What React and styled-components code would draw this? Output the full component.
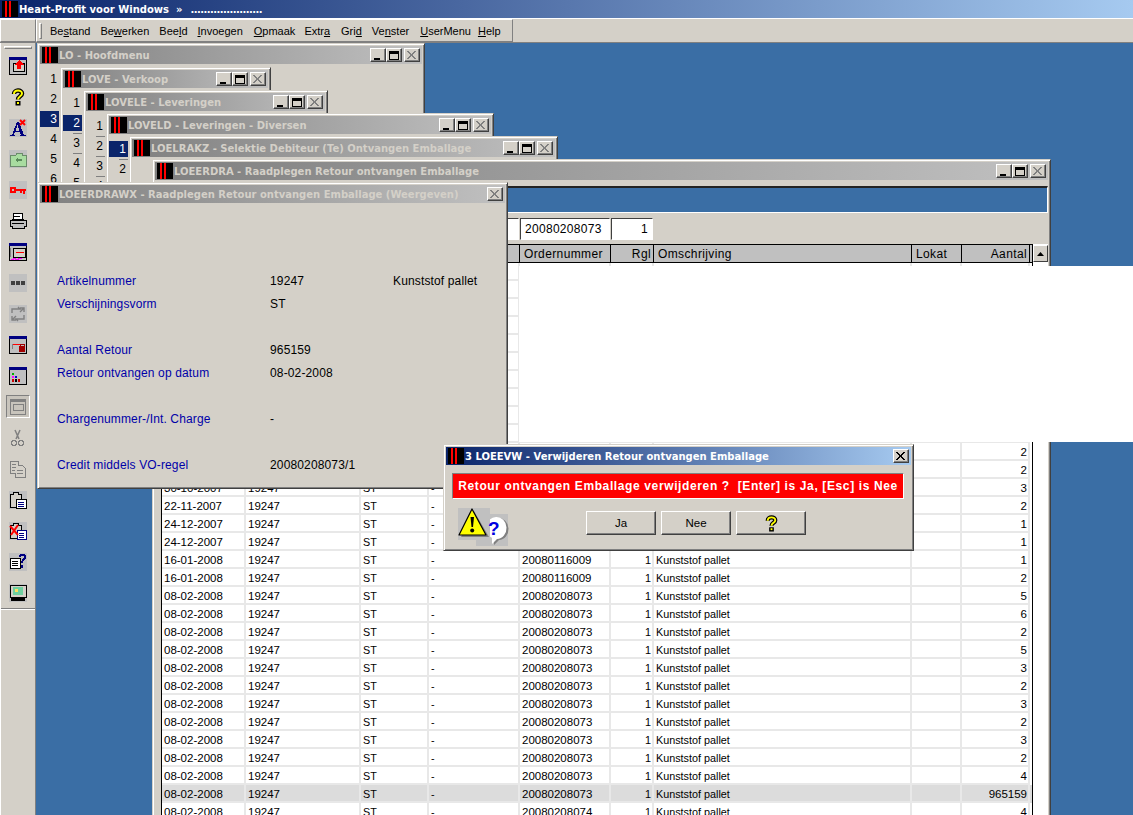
import React from "react";
import styled, { createGlobalStyle } from "styled-components";

const Global = createGlobalStyle`
  html, body { margin: 0; padding: 0; background: #d4d0c8; overflow: hidden; }
  * { box-sizing: border-box; }
`;
const UI = `"Liberation Sans", Arial, sans-serif`;
const HEAD = `"DejaVu Sans", Verdana, sans-serif`;

const Screen = styled.div`
  width: 1133px; height: 815px; display: flex; flex-direction: column; overflow: hidden;
  background: #d4d0c8; font-family: ${UI}; font-size: 11px; color: #000;
`;
const AppTitle = styled.div`
  height: 18px; display: flex; align-items: center; padding-left: 2px; gap: 1px; flex: none;
  background: linear-gradient(90deg, #0a246a, #a6caf0); color: #fff;
  font: bold 10px ${HEAD}; white-space: pre;
`;
const Dots = styled.span`letter-spacing: -0.55px;`;
const MenuStrip = styled.div`
  height: 25px; flex: none; display: flex; border-top: 1px solid #fff;
  border-bottom: 1px solid #808080; background: #d4d0c8;
`;
const Band = styled.div`
  height: 23px; width: ${p => p.$w}px; display: flex; align-items: center; flex: none;
  border: 1px solid; border-color: #fff #808080 #808080 #fff;
`;
const Grip = styled.span`
  width: 3px; height: 16px; margin: 0 8px 0 2px; border: 1px solid; border-color: #fff #808080 #808080 #fff;
`;
const MenuItem = styled.span`
  margin-right: ${p => p.$gap}px; font-size: 11px; u { text-underline-offset: 1px; }
`;
const Body = styled.div`display: flex; flex: 1; min-height: 0;`;
const Tools = styled.div`
  width: 36px; flex: none; display: flex; flex-direction: column; align-items: center; position: relative;
  border-left: 1px solid #fff; border-right: 1px solid #808080; padding-top: 3px;
  background: linear-gradient(#d4d0c8 565px, #808080 565px, #808080 566px, #fff 566px, #fff 567px, #d4d0c8 567px);
`;
const ToolGrip = styled.div`
  width: 28px; height: 3px; flex: none; margin-bottom: 1px; border: 1px solid; border-color: #fff #808080 #808080 #fff;
`;
const ToolSlot = styled.div`
  width: 24px; height: 31px; flex: none; display: flex; align-items: center; justify-content: center;
  ${p => p.$active && `
    & > div { width: 24px; height: 23px; display:flex; align-items:center; justify-content:center;
      border: 1px solid; border-color: #808080 #fff #fff #808080; background: #c8c4bc; }
  `}
`;
const Desktop = styled.div`position: relative; flex: 1; background: #3a6ea5; overflow: hidden;`;

const Win = styled.div`
  position: absolute; left: ${p => p.$x - 36}px; top: ${p => p.$y - 43}px;
  width: ${p => p.$w}px; height: ${p => p.$h}px; padding: 2px;
  background: #d4d0c8; border: 1px solid; border-color: #d4d0c8 #404040 #404040 #d4d0c8;
  box-shadow: inset 1px 1px 0 #fff, inset -1px -1px 0 #808080;
  display: flex; flex-direction: column;
`;
const Caption = styled.div`
  height: 18px; flex: none; display: flex; align-items: center; padding: 0 2px;
  background: ${p => p.$active ? "linear-gradient(90deg, #0a246a, #a6caf0)" : "linear-gradient(90deg, #808080, #c0c0c0)"};
  color: ${p => p.$active ? "#fff" : "#d4d0c8"};
  font: bold 10px ${HEAD}; white-space: pre;
`;
const CaptionText = styled.span`flex: 1; margin-left: 1px; overflow: hidden;`;
const CapBtn = styled.span`
  width: 16px; height: 14px; flex: none; display: flex; align-items: center; justify-content: center;
  margin-left: ${p => p.$gap || 0}px; background: #d4d0c8;
  border: 1px solid; border-color: #fff #404040 #404040 #fff; box-shadow: inset -1px -1px 0 #808080;
`;
const MenuList = styled.div`padding-top: 7px; display: flex; flex-direction: column;`;
const MenuRow = styled.div`height: 20px; flex: none;`;
const MenuNum = styled.div`
  position: relative; width: 19px; height: 16px; line-height: 16px; text-align: right; padding-right: 2px; font-size: 12px;
  background: ${p => p.$sel ? "#0a246a" : "transparent"}; color: ${p => p.$sel ? "#fff" : "#000"};
  ${p => p.$rule && `&::before { content: ""; position: absolute; right: 0; top: -2px; width: 9px; height: 1px; background: #808080; }`}
`;
const TablePad = styled.div`display: flex; flex-direction: column; flex: 1; padding: 0 0 0 6px; min-height: 0;`;
const BluePanel = styled.div`
  height: 27px; margin: 6px 0 0 0; flex: none; background: #3a6ea5; border: 1px solid; border-color: #000 #fff #fff #000;
  border-top: 2px solid #222;
`;
const COLS = "84px 115px 68px 91px 91px 43px 258px 50px 68px 2px";
const FilterRow = styled.div`
  display: grid; grid-template-columns: ${COLS}; height: 22px; margin: 5px 0 4px 1px; flex: none;
`;
const Field = styled.div`
  height: 22px; padding: 0 4px; line-height: 20px; background: #fff; font-size: 12px; letter-spacing: 0.3px;
  margin-right: 1px; text-align: ${p => p.$right ? "right" : "left"};
  border: 1px solid; border-color: #404040 #fff #fff #404040;
`;
const GridWrap = styled.div`position: relative; width: 872px; flex: 1; border-left: 1px solid #000; border-right: 1px solid #000; background: #fff;`;
const HeadRow = styled.div`
  display: grid; grid-template-columns: ${COLS}; height: 19px; background: #c0c0c0;
  border-top: 1px solid #000; border-bottom: 1px solid #000;
`;
const HeadCell = styled.div`
  line-height: 18px; padding: 0 2px 0 4px; font-size: 12px; letter-spacing: 0.38px; border-right: 1px solid #000; overflow: hidden; white-space: nowrap;
  text-align: ${p => p.$right ? "right" : "left"};
`;
const Row = styled.div`
  display: grid; grid-template-columns: ${COLS}; height: 18px;
  background: ${p => p.$sel ? "#dcdcdc" : "#fff"};
`;
const Cell = styled.div`
  line-height: 18px; padding: 0 ${p => p.$right ? 1 : 2}px 0 2px; font-size: 10.8px; overflow: hidden; white-space: nowrap;
  border-right: 2px solid #e8e8e8; border-bottom: 2px solid #e8e8e8;
  text-align: ${p => p.$right ? "right" : "left"};
`;
const DateText = styled.span`font-size: 11.5px;`;
const ScrollTrack = styled.div`
  position: absolute; left: 871px; top: 0; bottom: 0; width: 15px; background: #fff;
`;
const ScrollBtn = styled.div`
  margin-top: 1px; width: 15px; height: 17px; background: #d4d0c8;
  display: flex; align-items: center; justify-content: center;
  border: 1px solid; border-color: #fff #404040 #404040 #fff;
`;
const WhitePatch = styled.div`
  position: absolute; left: ${519 - 36}px; top: ${266 - 43}px; width: ${1133 - 519}px; height: ${442 - 266}px; background: #fff;
`;
const FormBody = styled.div`
  display: grid; grid-template-columns: 213px 123px 1fr; grid-auto-rows: 23px; padding: 66px 0 0 17px; align-items: center;
`;
const FormLabel = styled.div`color: #0000a8; font-size: 12px; letter-spacing: 0.14px;`;
const FormValue = styled.div`font-size: 12px; letter-spacing: 0.14px;`;
const Alert = styled.div`
  height: 26px; margin: 8px 7px 0 6px; background: #f00; color: #fff; white-space: pre; flex: none; text-align: center;
  font: bold 12px/24px ${UI}; letter-spacing: 0.62px;
  border: 1px solid; border-color: #808080 #fff #fff #808080;
`;
const DialogBottom = styled.div`position: relative; display: flex; gap: 5px; padding: 12px 0 0 140px;`;
const Btn = styled.div`
  width: 70px; height: 24px; display: flex; align-items: center; justify-content: center; font-size: 11.5px;
  background: #d4d0c8; border: 1px solid; border-color: #fff #404040 #404040 #fff; box-shadow: inset -1px -1px 0 #808080;
`;
const DialogArt = styled.div`position: absolute; left: 12px; top: 9px; width: 52px; height: 40px;`;

/* ---- drawings ---- */
const Logo = () => (
  <svg width="16" height="16" viewBox="0 0 16 16" shapeRendering="crispEdges" style={{ flex: "none" }}>
    <rect width="16" height="16" fill="#000" />
    <rect x="3" width="2" height="16" fill="#f00" />
    <rect x="7" width="2" height="16" fill="#f00" />
  </svg>
);
const Glyph = ({ kind, dark }) => {
  const c = "#000";
  return (
    <svg width="10" height="9" viewBox="0 0 10 9" shapeRendering="crispEdges">
      {kind === "min" && <rect x="1" y="7" width="6" height="2" fill={c} />}
      {kind === "max" && <path d="M0.5 1.5h9v7h-9z M0 0h10v2H0z" fill="none" stroke={c} />}
      {kind === "close" && (
        <path d="M1 0l8 8M0 0l8 8M9 0l-8 8M8 0L0 8" stroke={dark ? "#000" : "#808080"} strokeWidth="1" shapeRendering="auto" />
      )}
    </svg>
  );
};
const Question = ({ s = 18 }) => (
  <svg width={s} height={s} viewBox="0 0 18 18">
    <path d="M5 6C5 1.500 13 1.500 13 5.500C13 8.500 9 8 9 11.500" fill="none" stroke="#000" strokeWidth="4.500" />
    <rect x="6.500" y="13" width="5" height="4.500" fill="#000" />
    <path d="M5 6C5 1.500 13 1.500 13 5.500C13 8.500 9 8 9 11.500" fill="none" stroke="#ff0" strokeWidth="2" />
    <rect x="8" y="14" width="2" height="2" fill="#ff0" />
  </svg>
);
const I = ({ children, bg }) => (
  <svg width="18" height="18" viewBox="0 0 18 18" shapeRendering="crispEdges">
    {bg && <rect width="18" height="18" fill="#c0c0c0" />}
    {children}
  </svg>
);
const Frame = ({ children }) => (
  <I>
    <rect x="0.5" y="0.5" width="17" height="17" fill="#c0c0c0" stroke="#000" />
    <rect width="18" height="3" fill="#000080" />
    {children}
  </I>
);
const icons = [
  <Frame><rect x="4" y="6" width="11" height="8" fill="#d4d0c8" stroke="#000" /><path d="M10 3l5 5h-3v4H8V8H5z" fill="#f00" /></Frame>,
  <Question />,
  <I bg><path d="M1 17h5v-1H5l1-3h5l1 3h-1v1h6v-1h-2L10 3H8L3 16H1zM6.500 12L8.500 6l2 6z" fill="#000080" /><path d="M11 1l5 5M16 1l-5 5" stroke="#f00" strokeWidth="2" shapeRendering="auto" /></I>,
  <I bg><path d="M1 5h6l1 -2h5v2h4v11H1z" fill="#a8dca0" stroke="#6a8a6a" /><path d="M6 10l3-3v2h4v2H9v2z" fill="#5a8a5a" /></I>,
  <I bg><circle cx="4" cy="9" r="2.500" fill="none" stroke="#f00" strokeWidth="2" /><path d="M7 8h10v2h-1v3h-2v-3h-1v2h-2v-2H7z" fill="#f00" /></I>,
  <I><path d="M5 1h8l1 6H4z" fill="#fff" stroke="#000" /><path d="M1 8h16v6h-2v2H3v-2H1z" fill="#c0c0c0" stroke="#000" /><path d="M3 11h12M5 4h6" stroke="#000" /></I>,
  <Frame><rect x="4" y="5" width="12" height="9" fill="#d4d0c8" stroke="#000" /><rect x="7" y="9" width="8" height="1" fill="#f00" /><path d="M2 16h2v-1h2v1h3v-1h3v1" stroke="#f0f" fill="none" /><rect x="1" y="5" width="1" height="9" fill="#808080" /></Frame>,
  <I bg><rect x="2" y="7" width="4" height="4" fill="#404040" /><rect x="7" y="7" width="4" height="4" fill="#404040" /><rect x="12" y="7" width="4" height="4" fill="#404040" /></I>,
  <I bg><path d="M3 8V4h8l-2-2M15 10v4H7l2 2M3 15l4-4M3 11v4h4M15 3l-4 4M15 7V3h-4" fill="none" stroke="#808080" strokeWidth="1.400" shapeRendering="auto" /></I>,
  <Frame><rect x="3" y="8" width="10" height="1" fill="#f00" /><rect x="3" y="8" width="1" height="5" fill="#808080" /><rect x="10" y="10" width="6" height="6" fill="#a00000" /><path d="M11 10V8h4v2" fill="none" stroke="#a00000" /></Frame>,
  <Frame><rect x="3" y="6" width="2" height="2" fill="#0a0" /><rect x="3" y="9" width="2" height="2" fill="#f0f" /><rect x="3" y="12" width="2" height="3" fill="#c00" /><rect x="6" y="9" width="2" height="2" fill="#00c" /><rect x="6" y="12" width="2" height="3" fill="#000" /><rect x="9" y="12" width="2" height="3" fill="#c00" /></Frame>,
  <div><I><rect x="1.500" y="1.500" width="15" height="15" fill="none" stroke="#808080" strokeWidth="1.500" /><rect x="1" y="1" width="16" height="3" fill="#808080" /><rect x="4" y="6" width="10" height="6" fill="none" stroke="#808080" /></I></div>,
  <I><path d="M6 1l4 9M11 1L7 10" stroke="#808080" strokeWidth="1.500" shapeRendering="auto" /><circle cx="5" cy="14" r="2.500" fill="none" stroke="#808080" strokeWidth="1.500" /><circle cx="12" cy="14" r="2.500" fill="none" stroke="#808080" strokeWidth="1.500" /></I>,
  <I><path d="M1 1h8v4h4l3 3v9H6v-4H1z" fill="#d4d0c8" stroke="#808080" /><path d="M3 4h4M3 7h4M3 10h3M8 10h6M8 13h6" stroke="#808080" /></I>,
  <I bg><path d="M1 3h3V1h5v2h3v13H1z" fill="#d4d0c8" stroke="#000" /><rect x="7" y="8" width="10" height="9" fill="#fff" stroke="#000" /><path d="M9 11h6M9 13h6M9 15h6" stroke="#000080" /></I>,
  <I bg><path d="M1 3h3V1h5v2h3v13H1z" fill="#d4d0c8" stroke="#000" /><rect x="8" y="8" width="9" height="9" fill="#fff" stroke="#000080" /><path d="M10 11h5M10 13h5M10 15h5" stroke="#000080" /><path d="M1 4l8 9M9 3l-7 10" stroke="#f00" strokeWidth="2" shapeRendering="auto" /></I>,
  <I bg><path d="M1 5h10v10H1z" fill="#fff" stroke="#000" /><path d="M3 8h6M3 10h6M3 12h6" stroke="#000" /><path d="M11 4C11 1 16 1 16 4C16 7 13 6 13 10" fill="none" stroke="#000080" strokeWidth="2" /><rect x="12" y="12" width="2" height="3" fill="#000080" /></I>,
  <I bg><rect x="1" y="1" width="16" height="12" fill="#d4d0c8" stroke="#000" /><rect x="4" y="3" width="10" height="8" fill="#6fd0a0" /><rect x="6" y="5" width="3" height="3" fill="#ffe060" /><rect x="2" y="14" width="14" height="3" fill="#000" /></I>,
];

const Warn = () => (
  <svg width="52" height="40" viewBox="0 0 52 40">
    <rect x="18" y="6" width="32" height="32" fill="#c0c0c0" />
    <path d="M38 9a10 11 0 1 1 1 22l-5 5 0-6A10 11 0 0 1 38 9z" fill="#808080" transform="translate(2 1)" />
    <path d="M38 9a10 11 0 1 1 1 22l-5 5 0-6A10 11 0 0 1 38 9z" fill="#fff" />
    <rect width="32" height="32" fill="#c0c0c0" />
    <path d="M16 3L31 29H3z" fill="#808080" />
    <path d="M14 1L28 27H1z" fill="#ff0" stroke="#000" strokeWidth="1.200" strokeLinejoin="round" />
    <path d="M12.500 9h3.500l-1 10h-1.500z" fill="#000" />
    <circle cx="14.200" cy="22.500" r="2" fill="#000" />
    <text x="30" y="27" fill="#0000e0" style={{ font: `bold 19px ${UI}` }}>?</text>
  </svg>
);

/* ---- data ---- */
const menu = [
  ["Be", "s", "tand", 10], ["Be", "w", "erken", 10], ["Bee", "l", "d", 10], ["", "I", "nvoegen", 11],
  ["", "O", "pmaak", 9], ["Extr", "a", "", 11], ["Gri", "d", "", 10], ["Ve", "n", "ster", 11],
  ["", "U", "serMenu", 7], ["", "H", "elp", 0],
];
const O1 = "20080208073";
const rowData = [
  ...Array.from({ length: 10 }, () => ["30-10-2007", "20071030011", 2]),
  ["30-10-2007", "20071030011", 2], ["30-10-2007", "20071030011", 2],
  ["30-10-2007", "20071030011", 3], ["22-11-2007", "20071122005", 2], ["24-12-2007", "20071224002", 1], ["24-12-2007", "20071224002", 1],
  ["16-01-2008", "20080116009", 1], ["16-01-2008", "20080116009", 2],
  ["08-02-2008", O1, 5], ["08-02-2008", O1, 6], ["08-02-2008", O1, 2], ["08-02-2008", O1, 5], ["08-02-2008", O1, 3],
  ["08-02-2008", O1, 2], ["08-02-2008", O1, 3], ["08-02-2008", O1, 2], ["08-02-2008", O1, 3], ["08-02-2008", O1, 2],
  ["08-02-2008", O1, 4], ["08-02-2008", O1, 965159], ["08-02-2008", "20080208074", 4],
];
const formRows = [
  ["Artikelnummer", "19247", "Kunststof pallet"], ["Verschijningsvorm", "ST"], [],
  ["Aantal Retour", "965159"], ["Retour ontvangen op datum", "08-02-2008"], [],
  ["Chargenummer-/Int. Charge", "-"], [],
  ["Credit middels VO-regel", "20080208073/1"],
];

const Buttons = ({ full, active }) => (
  <>
    {full && <CapBtn><Glyph kind="min" /></CapBtn>}
    {full && <CapBtn><Glyph kind="max" /></CapBtn>}
    <CapBtn $gap={full ? 2 : 0}><Glyph kind="close" dark={active} /></CapBtn>
  </>
);
const TitleOf = ({ text, full = true, active }) => (
  <Caption $active={active}>
    <Logo />
    <CaptionText>{text}</CaptionText>
    <Buttons full={full} active={active} />
  </Caption>
);
const Numbers = ({ sel, rules = [] }) => (
  <MenuList>
    {[1, 2, 3, 4, 5, 6, 7, 8].map(n => (
      <MenuRow key={n}>
        <MenuNum $sel={n === sel} $rule={rules.includes(n)}>{n}</MenuNum>
      </MenuRow>
    ))}
  </MenuList>
);

export default function App() {
  return (
    <Screen>
      <Global />
      <AppTitle><Logo />{"Heart-Profit voor Windows  »  "}<Dots>......................</Dots></AppTitle>
      <MenuStrip>
        <Band $w={36} />
        <Band $w={477}>
          <Grip />
          {menu.map(([a, u, b, g]) => (
            <MenuItem key={a + u + b} $gap={g}>{a}<u>{u}</u>{b}</MenuItem>
          ))}
        </Band>
      </MenuStrip>
      <Body>
        <Tools>
          <ToolGrip />
          {icons.map((ic, i) => <ToolSlot key={i} $active={i === 11}>{ic}</ToolSlot>)}
        </Tools>
        <Desktop>
          <Win $x={37} $y={43} $w={388} $h={300}>
            <TitleOf text="LO - Hoofdmenu" />
            <Numbers sel={3} />
          </Win>
          <Win $x={60} $y={67} $w={211} $h={300}>
            <TitleOf text="LOVE - Verkoop" />
            <Numbers sel={2} rules={[3, 4]} />
          </Win>
          <Win $x={83} $y={90} $w={245} $h={300}>
            <TitleOf text="LOVELE - Leveringen" />
            <Numbers rules={[2, 3, 4]} />
          </Win>
          <Win $x={106} $y={113} $w={388} $h={300}>
            <TitleOf text="LOVELD - Leveringen - Diversen" />
            <Numbers sel={1} rules={[2]} />
          </Win>
          <Win $x={129} $y={136} $w={429} $h={300}>
            <TitleOf text="LOELRAKZ - Selektie Debiteur (Te) Ontvangen Emballage" />
          </Win>
          <Win $x={152} $y={159} $w={899} $h={700}>
            <TitleOf text="LOEERDRA - Raadplegen Retour ontvangen Emballage" />
            <BluePanel />
            <TablePad>
              <FilterRow>
                <Field /><Field /><Field /><Field />
                <Field>20080208073</Field>
                <Field $right>1</Field>
              </FilterRow>
              <GridWrap>
                <HeadRow>
                  <HeadCell>Datum</HeadCell><HeadCell>Artikel</HeadCell><HeadCell>Vv</HeadCell><HeadCell>Charge</HeadCell>
                  <HeadCell>Ordernummer</HeadCell><HeadCell $right>Rgl</HeadCell><HeadCell>Omschrijving</HeadCell>
                  <HeadCell>Lokat</HeadCell><HeadCell $right>Aantal</HeadCell><HeadCell />
                </HeadRow>
                {rowData.map(([date, order, qty], i) => (
                  <Row key={i} $sel={i === 29}>
                    <Cell><DateText>{date}</DateText></Cell>
                    <Cell><DateText>19247</DateText></Cell>
                    <Cell>ST</Cell>
                    <Cell>-</Cell>
                    <Cell><DateText>{order}</DateText></Cell>
                    <Cell $right>1</Cell>
                    <Cell>Kunststof pallet</Cell>
                    <Cell />
                    <Cell $right><DateText>{qty}</DateText></Cell>
                  </Row>
                ))}
                <ScrollTrack>
                  <ScrollBtn>
                    <svg width="7" height="4" viewBox="0 0 7 4"><path d="M3.500 0L7 4H0z" fill="#000" /></svg>
                  </ScrollBtn>
                </ScrollTrack>
              </GridWrap>
            </TablePad>
          </Win>
          <WhitePatch />
          <Win $x={37} $y={182} $w={471} $h={307}>
            <TitleOf text="LOEERDRAWX - Raadplegen Retour ontvangen Emballage (Weergeven)" full={false} />
            <FormBody>
              {formRows.map(([l, v, x], i) => (
                <React.Fragment key={i}>
                  <FormLabel>{l}</FormLabel>
                  <FormValue>{v}</FormValue>
                  <FormValue>{x}</FormValue>
                </React.Fragment>
              ))}
            </FormBody>
          </Win>
          <Win $x={443} $y={444} $w={471} $h={107}>
            <TitleOf text="3 LOEEVW - Verwijderen Retour ontvangen Emballage" full={false} active />
            <Alert>{"Retour ontvangen Emballage verwijderen ?  [Enter] is Ja, [Esc] is Nee"}</Alert>
            <DialogBottom>
              <DialogArt><Warn /></DialogArt>
              <Btn>Ja</Btn><Btn>Nee</Btn><Btn><Question s={17} /></Btn>
            </DialogBottom>
          </Win>
        </Desktop>
      </Body>
    </Screen>
  );
}
